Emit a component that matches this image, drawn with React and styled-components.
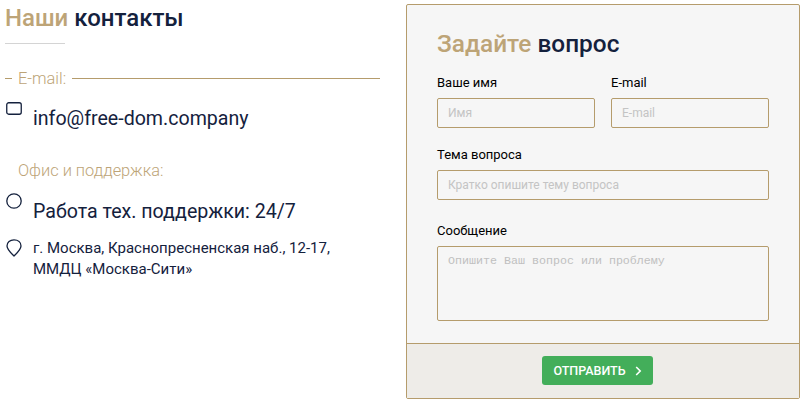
import React from "react";
import styled, { createGlobalStyle } from "styled-components";

const GOLD = "#b59c6c";
const DARK = "#14213d";

const GlobalStyle = createGlobalStyle`
  html, body {
    margin: 0;
    padding: 0;
    background: #ffffff;
    font-family: Roboto, "Liberation Sans", sans-serif;
  }
  * {
    box-sizing: border-box;
  }
`;

const Page = styled.div`
  width: 805px;
  height: 404px;
  display: flex;
  align-items: flex-start;
  overflow: hidden;
`;

const Contacts = styled.div`
  width: 375px;
  margin-left: 5px;
  margin-top: 4px;
`;

const Heading = styled.h2`
  margin: 0;
  font-size: ${props => props.size || "24px"};
  line-height: 28px;
  font-weight: 500;
  color: ${DARK};
  span {
    color: #bda477;
  }
`;

const Rule = styled.div`
  width: 60px;
  height: 1px;
  margin-top: 11px;
  background: #d4d4d4;
`;

const SectionLabel = styled.div`
  display: flex;
  align-items: center;
  margin-top: 25px;
  height: 19px;
  font-size: 16.4px;
  font-weight: 300;
  color: #bda477;
  &::before {
    content: "";
    width: 7px;
    height: 1px;
    margin-right: 6px;
    background: ${GOLD};
  }
  &::after {
    content: "";
    flex: 1;
    height: 1px;
    margin-left: 6px;
    background: ${GOLD};
  }
`;

const PlainLabel = styled.div`
  margin: 30px 0 0 13px;
  height: 19px;
  line-height: 19px;
  font-size: 16.4px;
  font-weight: 300;
  color: #bda477;
`;

const ContactRow = styled.div`
  display: flex;
  align-items: flex-start;
  margin-top: ${props => props.top || "12px"};
`;

const IconBox = styled.div`
  width: 28px;
  flex: none;
  display: flex;
  padding-left: 1px;
  margin-top: ${props => props.shift || "0"};
  color: ${DARK};
`;

const ContactText = styled.div`
  margin-top: ${props => props.shift || "5px"};
  font-size: ${props => props.size || "19.6px"};
  line-height: ${props => props.leading || "24px"};
  color: ${DARK};
`;

const FormPanel = styled.form`
  width: 394px;
  height: 395px;
  margin-left: 26px;
  margin-top: 4px;
  display: flex;
  flex-direction: column;
  border: 1px solid ${GOLD};
  border-radius: 2px;
  background: #f6f6f6;
`;

const FormBody = styled.div`
  flex: 1;
  padding: 25px 30px 0;
`;

const FieldGrid = styled.div`
  display: grid;
  grid-template-columns: 158px 158px;
  column-gap: 16px;
  margin-top: 17px;
`;

const Field = styled.label`
  display: block;
  margin-top: ${props => props.top || "0"};
`;

const FieldName = styled.div`
  font-size: 13px;
  line-height: 15px;
  color: #000000;
  margin-bottom: 8px;
`;

const TextInput = styled.input`
  display: block;
  width: 100%;
  height: 30px;
  padding: 0 10px;
  border: 1px solid ${GOLD};
  border-radius: 2px;
  background: transparent;
  font-family: Roboto, sans-serif;
  font-size: 12px;
  outline: none;
  &::placeholder {
    color: #c4c4c4;
    opacity: 1;
  }
`;

const MessageInput = styled.textarea`
  display: block;
  width: 100%;
  height: 75px;
  padding: 7px 10px;
  border: 1px solid ${GOLD};
  border-radius: 2px;
  background: transparent;
  font-family: "Liberation Mono", monospace;
  font-size: 11.67px;
  resize: none;
  outline: none;
  &::placeholder {
    color: #c0c0c0;
    opacity: 1;
  }
`;

const FormFooter = styled.div`
  height: 55px;
  display: flex;
  align-items: flex-start;
  justify-content: center;
  padding: 12px 11px 0 0;
  border-top: 1px solid ${GOLD};
  background: #eeece8;
`;

const SubmitButton = styled.button`
  width: 111px;
  height: 29px;
  display: flex;
  align-items: center;
  justify-content: center;
  gap: 9px;
  border: none;
  border-radius: 3px;
  background: #43ae5a;
  color: #ffffff;
  font-family: Roboto, sans-serif;
  font-size: 12.5px;
  font-weight: 500;
  text-transform: uppercase;
`;

const App = () => (
  <Page>
    <GlobalStyle />
    <Contacts>
      <Heading>
        <span>Наши</span> контакты
      </Heading>
      <Rule />
      <SectionLabel>E-mail:</SectionLabel>
      <ContactRow top="14px">
        <IconBox>
          <svg width="16" height="13" viewBox="0 0 16 13" fill="none">
            <rect x="0.75" y="0.75" width="14.5" height="11.5" rx="2" stroke="currentColor" strokeWidth="1.3" />
          </svg>
        </IconBox>
        <ContactText>info@free-dom.company</ContactText>
      </ContactRow>
      <PlainLabel>Офис и поддержка:</PlainLabel>
      <ContactRow top="13px">
        <IconBox>
          <svg width="16" height="16" viewBox="0 0 16 16" fill="none">
            <circle cx="8" cy="8" r="7.2" stroke="currentColor" strokeWidth="1.3" />
          </svg>
        </IconBox>
        <ContactText shift="7px">Работа тех. поддержки: 24/7</ContactText>
      </ContactRow>
      <ContactRow top="14px">
        <IconBox shift="1px">
          <svg width="16" height="18" viewBox="0 0 16 18" fill="none">
            <path
              d="M8 17 C5 14 1 10.5 1 7 C1 3.2 4 0.8 8 0.8 C12 0.8 15 3.2 15 7 C15 10.5 11 14 8 17 Z"
              stroke="currentColor"
              strokeWidth="1.3"
              strokeLinejoin="round"
            />
          </svg>
        </IconBox>
        <ContactText shift="0" size="15px" leading="21px">
          г. Москва, Краснопресненская наб., 12-17,
          <br />
          ММДЦ «Москва-Сити»
        </ContactText>
      </ContactRow>
    </Contacts>
    <FormPanel>
      <FormBody>
        <Heading size="24.4px">
          <span>Задайте</span> вопрос
        </Heading>
        <FieldGrid>
          <Field>
            <FieldName>Ваше имя</FieldName>
            <TextInput placeholder="Имя" />
          </Field>
          <Field>
            <FieldName>E-mail</FieldName>
            <TextInput placeholder="E-mail" />
          </Field>
        </FieldGrid>
        <Field top="19px">
          <FieldName>Тема вопроса</FieldName>
          <TextInput placeholder="Кратко опишите тему вопроса" />
        </Field>
        <Field top="23px">
          <FieldName>Сообщение</FieldName>
          <MessageInput placeholder="Опишите Ваш вопрос или проблему" />
        </Field>
      </FormBody>
      <FormFooter>
        <SubmitButton type="button">
          Отправить
          <svg width="7" height="10" viewBox="0 0 7 10" fill="none">
            <path d="M1.2 1 L5.2 5 L1.2 9" stroke="currentColor" strokeWidth="1.6" />
          </svg>
        </SubmitButton>
      </FormFooter>
    </FormPanel>
  </Page>
);

export default App;
